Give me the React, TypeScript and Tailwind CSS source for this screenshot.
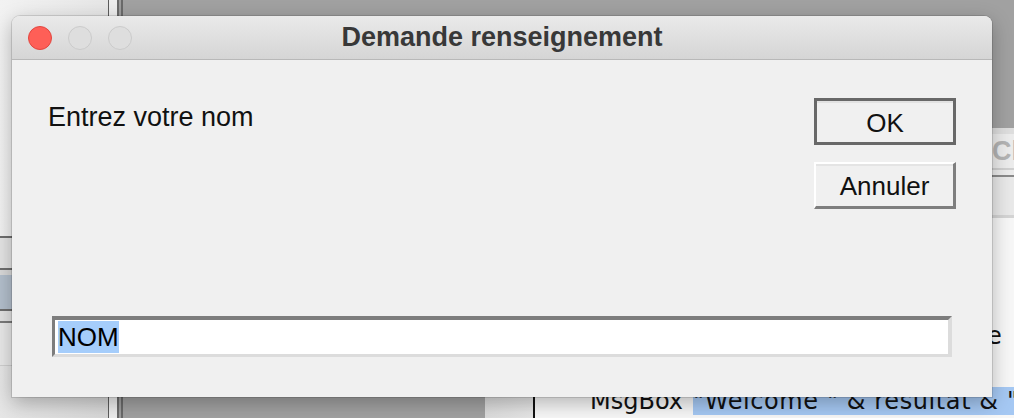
import React from "react";

export default function App() {
  return (
    <div className="relative w-[1014px] h-[418px] overflow-hidden bg-[#a1a1a1] font-['Liberation_Sans',Arial,sans-serif]">
      {/* Left background window */}
      <div className="absolute left-0 top-0 w-[108px] h-[418px] bg-[#ececec] flex flex-col">
        <div className="h-[236px] bg-gradient-to-r from-[#f2f2f2] to-[#e6e6e6]" />
        <div className="h-[2px] bg-[#6e6e6e]" />
        <div className="h-[30px] bg-[#e4e4e4]" />
        <div className="h-[2px] bg-[#6e6e6e]" />
        <div className="h-[5px] bg-[#d9d9d9]" />
        <div className="h-[34px] bg-[#b3bfcc]" />
        <div className="h-[2px] bg-[#6e6e6e]" />
        <div className="h-[10px] bg-[#e2e2e2]" />
        <div className="h-[2px] bg-[#7a7a7a]" />
        <div className="h-[42px] bg-[#e8e8e8]" />
        <div className="h-[1px] bg-[#cfcfcf]" />
        <div className="flex-1 bg-gradient-to-r from-[#e6e6e6] to-[#d8d8d8]" />
      </div>
      {/* Vertical separator lines */}
      <div className="absolute left-[108px] top-0 h-[418px] flex">
        <div className="w-[1px] bg-[#5c5c5c]" />
        <div className="w-[8px] bg-[#ededed]" />
        <div className="w-[2px] bg-[#6a6a6a]" />
        <div className="w-[2px] bg-[#9d9d9d]" />
        <div className="w-[2px] bg-[#6a6a6a]" />
      </div>
      {/* Editor window (right) */}
      <div className="absolute left-[485px] top-[128px] right-0 bottom-0 flex flex-col bg-[#ececec]">
        <div className="h-[6px] bg-[#dedede]" />
        <div className="h-[34px] flex items-center pl-[507px]">
          <span className="text-[27px] font-bold text-[#b4b4b4] leading-none">Cla</span>
        </div>
        <div className="h-[2px] bg-[#d0d0d0]" />
        <div className="h-[5px]" />
        <div className="h-[2px] bg-[#8a8a8a]" />
        <div className="h-[38px] bg-[#e9e9e9]" />
        <div className="h-[3px] bg-[#d4d4d4]" />
        <div className="flex-1 flex">
          <div className="w-[48px] bg-gradient-to-r from-[#dcdcdc] to-[#e6e6e6]" />
          <div className="w-[2px] bg-[#111]" />
          <div className="flex-1 bg-[#f7f7f7] relative font-['DejaVu_Sans',sans-serif] text-[24px] text-[#111] whitespace-pre">
            <div className="absolute left-[452px] top-[104px] leading-[28px]">e</div>
            <div className="absolute left-[55px] top-[169px] leading-[28px]">
              <span className="mr-[10px]">MsgBox</span>
              <span className="bg-[#a5c8f3] tracking-[0.6px]">"Welcome " &amp; resultat &amp; "</span>
            </div>
          </div>
        </div>
      </div>

      {/* Dialog window */}
      <div className="absolute left-[12px] top-[16px] w-[980px] h-[381px] rounded-t-[8px] bg-[#f0f0f0] shadow-[0_6px_20px_rgba(0,0,0,0.28),0_0_0_1px_rgba(0,0,0,0.12)] flex flex-col overflow-hidden">
        <div className="relative h-[44px] shrink-0 flex items-center justify-center bg-gradient-to-b from-[#eaeaea] to-[#d5d5d5] border-b border-[#b8b8b8]">
          <div className="absolute left-[16px] top-[10px] flex gap-[16px]">
            <div className="w-[24px] h-[24px] rounded-full bg-[#fe5f57] border border-[#e2463f]" />
            <div className="w-[24px] h-[24px] rounded-full bg-[#dedede] border border-[#cbcbcb]" />
            <div className="w-[24px] h-[24px] rounded-full bg-[#dedede] border border-[#cbcbcb]" />
          </div>
          <span className="text-[27px] font-bold text-[#383838] leading-none">Demande renseignement</span>
        </div>
        <div className="flex-1 flex flex-col px-[36px] pt-[38px] pb-[40px]">
          <div className="flex justify-between">
            <div className="mt-[4px] text-[27px] leading-[30px] text-[#111]">Entrez votre nom</div>
            <div className="flex flex-col gap-[17px]">
              <button className="w-[142px] h-[47px] border-[3px] border-[#686868] bg-[#f0f0f0] flex items-center justify-center">
                <span className="w-full h-full flex items-center justify-center border-t-2 border-[#e2e2e2] text-[26px] leading-none text-[#111]">OK</span>
              </button>
              <button className="w-[142px] h-[47px] border-t-2 border-l-2 border-t-[#ffffff] border-l-[#ffffff] border-b-[3px] border-r-[3px] border-b-[#7e7e7e] border-r-[#7e7e7e] bg-[#f0f0f0] flex items-center justify-center">
                <span className="w-full h-full flex items-center justify-center border-t-2 border-[#e4e4e4] text-[26px] leading-none text-[#111]">Annuler</span>
              </button>
            </div>
          </div>
          <div className="flex-1" />
          <div className="mx-[4px] h-[41px] bg-white border-t-[4px] border-l-[3px] border-t-[#7d7d7d] border-l-[#7d7d7d] border-b-[3px] border-r-[4px] border-b-[#dcdcdc] border-r-[#dcdcdc] flex items-center pl-[3px]">
            <span className="bg-[#a5cdfb] text-[26px] leading-[32px] text-[#000]">NOM</span>
          </div>
        </div>
      </div>
    </div>
  );
}
